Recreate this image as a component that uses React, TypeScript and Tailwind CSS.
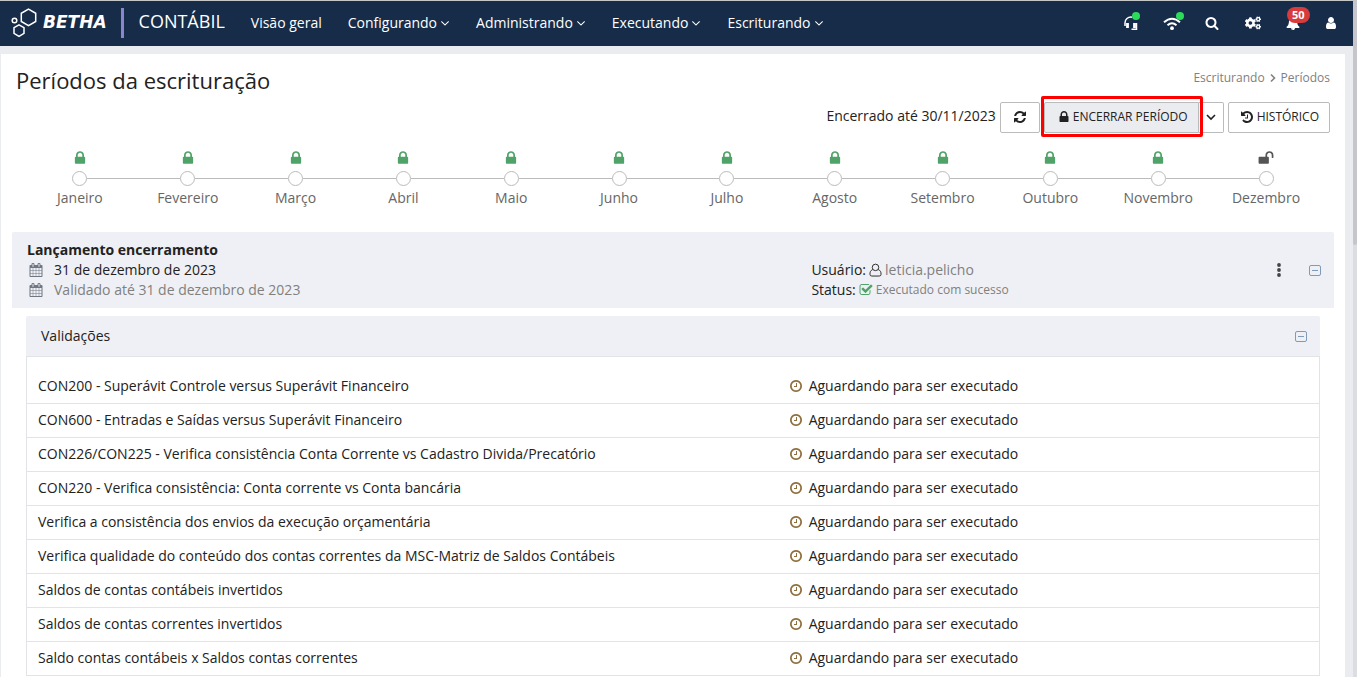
import { FaCogs } from "react-icons/fa";

type IconProps = { d: string; size?: number; className?: string };

function Icon({ d, size = 14, className = "" }: IconProps) {
  return (
    <svg
      viewBox="0 0 1792 1792"
      width={size}
      height={size}
      fill="currentColor"
      className={`shrink-0 ${className}`}
      aria-hidden="true"
    >
      <path d={d} />
    </svg>
  );
}

const LOCK =
  "M640 768h512v-192q0-106-75-181t-181-75-181 75-75 181v192zm832 96v576q0 40-28 68t-68 28h-960q-40 0-68-28t-28-68v-576q0-40 28-68t68-28h32v-192q0-184 132-316t316-132 316 132 132 316v192h32q40 0 68 28t28 68z";
const UNLOCK =
  "M1728 576v256q0 26-19 45t-45 19h-64q-26 0-45-19t-19-45v-256q0-106-75-181t-181-75-181 75-75 181v192h96q40 0 68 28t28 68v576q0 40-28 68t-68 28h-960q-40 0-68-28t-28-68v-576q0-40 28-68t68-28h672v-192q0-185 131.5-316.5t316.5-131.5 316.5 131.5 131.5 316.5z";
const REFRESH =
  "M1639 1056q0 5-1 7-64 268-268 434.5t-478 166.5q-146 0-282.5-55t-243.5-157l-129 129q-19 19-45 19t-45-19-19-45v-448q0-26 19-45t45-19h448q26 0 45 19t19 45-19 45l-137 137q71 66 161 102t187 36q134 0 250-65t186-179q11-17 53-117 8-23 30-23h192q13 0 22.5 9.5t9.5 22.5zm25-800v448q0 26-19 45t-45 19h-448q-26 0-45-19t-19-45 19-45l138-138q-148-137-349-137-134 0-250 65t-186 179q-11 17-53 117-8 23-30 23h-199q-13 0-22.5-9.5t-9.5-22.5v-7q65-268 270-434.5t480-166.5q146 0 284 55.5t245 156.5l130-129q19-19 45-19t45 19 19 45z";
const HISTORY =
  "M1664 896q0 156-61 298t-164 245-245 164-298 61q-172 0-327-72.5t-264-204.5q-7-10-6.5-22.5t8.5-20.5l137-138q10-9 25-9 16 2 23 12 73 95 179 147t225 52q104 0 198.5-40.5t163.5-109.5 109.5-163.5 40.5-198.5-40.5-198.5-109.5-163.5-163.5-109.5-198.5-40.5q-98 0-188 35.5t-160 101.5l137 138q31 30 14 69-17 40-59 40h-448q-26 0-45-19t-19-45v-448q0-42 40-59 39-17 69 14l130 129q107-101 244.5-156.5t284.5-55.5q156 0 298 61t245 164 164 245 61 298zm-640-288v448q0 14-9 23t-23 9h-320q-14 0-23-9t-9-23v-64q0-14 9-23t23-9h224v-352q0-14 9-23t23-9h64q14 0 23 9t9 23z";
const CLOCK =
  "M1024 544v448q0 14-9 23t-23 9h-320q-14 0-23-9t-9-23v-64q0-14 9-23t23-9h224v-352q0-14 9-23t23-9h64q14 0 23 9t9 23zm416 352q0-148-73-273t-198-198-273-73-273 73-198 198-73 273 73 273 198 198 273 73 273-73 198-198 73-273zm224 0q0 209-103 385.5t-279.5 279.5-385.5 103-385.5-103-279.5-279.5-103-385.5 103-385.5 279.5-279.5 385.5-103 385.5 103 279.5 279.5 103 385.5z";
const SEARCH =
  "M1216 832q0-185-131.5-316.5t-316.5-131.5-316.5 131.5-131.5 316.5 131.5 316.5 316.5 131.5 316.5-131.5 131.5-316.5zm512 832q0 52-38 90t-90 38q-54 0-90-38l-343-342q-179 124-399 124-143 0-273.5-55.5t-225-150-150-225-55.5-273.5 55.5-273.5 150-225 225-150 273.5-55.5 273.5 55.5 225 150 150 225 55.5 273.5q0 220-124 399l343 343q37 37 37 90z";
const CALENDAR =
  "M192 1664h288v-288h-288v288zm352 0h320v-288h-320v288zm-352-352h288v-320h-288v320zm352 0h320v-320h-320v320zm-352-384h288v-288h-288v288zm736 736h320v-288h-320v288zm-384-736h320v-288h-320v288zm768 736h288v-288h-288v288zm-384-352h320v-320h-320v320zm-352-864v-288q0-13-9.5-22.5t-22.5-9.5h-64q-13 0-22.5 9.5t-9.5 22.5v288q0 13 9.5 22.5t22.5 9.5h64q13 0 22.5-9.5t9.5-22.5zm736 864h288v-320h-288v320zm-384-384h320v-288h-320v288zm384 0h288v-288h-288v288zm32-480v-288q0-13-9.5-22.5t-22.5-9.5h-64q-13 0-22.5 9.5t-9.5 22.5v288q0 13 9.5 22.5t22.5 9.5h64q13 0 22.5-9.5t9.5-22.5zm384-64v1280q0 52-38 90t-90 38h-1408q-52 0-90-38t-38-90v-1280q0-52 38-90t90-38h128v-96q0-66 47-113t113-47h64q66 0 113 47t47 113v96h384v-96q0-66 47-113t113-47h64q66 0 113 47t47 113v96h128q52 0 90 38t38 90z";
const CHECK_SQUARE =
  "M1472 930v318q0 119-84.5 203.5t-203.5 84.5h-832q-119 0-203.5-84.5t-84.5-203.5v-832q0-119 84.5-203.5t203.5-84.5h832q63 0 117 25 15 7 18 23 3 17-9 29l-49 49q-10 10-23 10-3 0-9-2-23-6-45-6h-832q-66 0-113 47t-47 113v832q0 66 47 113t113 47h832q66 0 113-47t47-113v-254q0-13 9-22l64-64q10-10 23-10 6 0 12 3 20 8 20 29zm231-489l-814 814q-24 24-57 24t-57-24l-430-430q-24-24-24-57t24-57l110-110q24-24 57-24t57 24l263 263 647-647q24-24 57-24t57 24l110 110q24 24 24 57t-24 57z";
const USER =
  "M1536 1399q0 109-62.5 187t-150.5 78h-854q-88 0-150.5-78t-62.5-187q0-85 8.5-160.5t31.5-152 58.5-131 94-89 134.5-34.5q131 128 313 128t313-128q76 0 134.5 34.5t94 89 58.5 131 31.5 152 8.5 160.5zm-256-887q0 159-112.5 271.5t-271.5 112.5-271.5-112.5-112.5-271.5 112.5-271.5 271.5-112.5 271.5 112.5 112.5 271.5z";
const BELL =
  "M912 1696q0-16-16-16-59 0-101.5-42.5t-42.5-101.5q0-16-16-16t-16 16q0 73 51.5 124.5t124.5 51.5q16 0 16-16zm816-288q0 52-38 90t-90 38h-448q0 106-75 181t-181 75-181-75-75-181h-448q-52 0-90-38t-38-90q50-42 91-88t85-119.5 74.5-158.5 50-206 19.5-260q0-152 117-282.5t307-158.5q-8-19-8-39 0-40 28-68t68-28 68 28 28 68q0 20-8 39 190 28 307 158.5t117 282.5q0 139 19.5 260t50 206 74.5 158.5 85 119.5 91 88z";
const ANGLE_DOWN =
  "M1395 736q0 13-10 23l-466 466q-10 10-23 10t-23-10l-466-466q-10-10-10-23t10-23l50-50q10-10 23-10t23 10l393 393 393-393q10-10 23-10t23 10l50 50q10 10 10 23z";

const menus = ["Configurando", "Administrando", "Executando", "Escriturando"];

const months = [
  "Janeiro",
  "Fevereiro",
  "Março",
  "Abril",
  "Maio",
  "Junho",
  "Julho",
  "Agosto",
  "Setembro",
  "Outubro",
  "Novembro",
  "Dezembro",
];

const validations = [
  "CON200 - Superávit Controle versus Superávit Financeiro",
  "CON600 - Entradas e Saídas versus Superávit Financeiro",
  "CON226/CON225 - Verifica consistência Conta Corrente vs Cadastro Divida/Precatório",
  "CON220 - Verifica consistência: Conta corrente vs Conta bancária",
  "Verifica a consistência dos envios da execução orçamentária",
  "Verifica qualidade do conteúdo dos contas correntes da MSC-Matriz de Saldos Contábeis",
  "Saldos de contas contábeis invertidos",
  "Saldos de contas correntes invertidos",
  "Saldo contas contábeis x Saldos contas correntes",
];

function Chevron({ direction = "down" }: { direction?: "down" | "right" }) {
  return (
    <svg
      viewBox="0 0 10 10"
      width={10}
      height={10}
      fill="none"
      stroke="currentColor"
      strokeWidth={1.6}
      className="shrink-0"
      aria-hidden="true"
    >
      <path d={direction === "down" ? "M1 3l4 4 4-4" : "M3 1.5L6.5 5 3 8.5"} />
    </svg>
  );
}

function CollapseButton() {
  return (
    <button aria-label="Recolher" className="pt-px text-[#7f9bb8]">
      <svg viewBox="0 0 12 12" width={12} height={12} fill="none" stroke="currentColor">
        <rect x="0.5" y="0.5" width="11" height="10" rx="1.5" />
        <path d="M3 5.5h6" />
      </svg>
    </button>
  );
}

function Header() {
  return (
    <header className="flex h-[46px] items-center border-t border-[#c4c6c8] bg-[#162c49] pb-0.5 text-white">
      <a href="#" className="ml-2.5 flex items-center">
        <svg viewBox="0 0 30 30" width={30} height={30} fill="none" stroke="#fff" strokeWidth={1.5}>
          <path d="M18.5 1.2l7.2 4.1v8.2l-7.2 4.1-7.2-4.1V5.3z" />
          <path d="M9 16.8l5 2.9v5.7l-5 2.900-5-2.900v-5.700z" />
          <circle cx="4.5" cy="12.5" r="2.3" />
        </svg>
        <span className="ml-[3px] font-['DejaVu_Sans',sans-serif] text-[17px] font-bold italic">BETHA</span>
      </a>
      <span className="ml-3.5 h-[30px] w-[3px] bg-[#8c85cb]" />
      <span className="ml-[15px] pb-1 text-lg">CONTÁBIL</span>
      <nav className="ml-[26px] flex gap-[26px] text-sm">
        <a href="#">Visão geral</a>
        {menus.map((menu) => (
          <button key={menu} className="flex items-center gap-[3px]">
            {menu}
            <Icon d={ANGLE_DOWN} size={14} className="-mx-0.5" />
          </button>
        ))}
      </nav>

      <div className="mr-[15px] ml-auto flex items-center">
        <button aria-label="Suporte" className="relative w-[41px]">
          <svg viewBox="0 0 16 16" width={16} height={16} fill="none" stroke="currentColor" className="mx-auto">
            <path d="M2 11V8a6 5.500 0 0 1 7-5.800" strokeWidth={1.500} />
            <path d="M13.500 8v6.200H8.500" strokeWidth={1.500} />
            <path d="M4.500 8v5M11.500 8v5" strokeWidth={2.800} />
          </svg>
          <span className="absolute -top-[3px] right-[11px] size-2 rounded-full bg-[#2ddb5b]" />
        </button>
        <button aria-label="Conexão" className="relative w-[41px]">
          <svg viewBox="0 0 18 16" width={18} height={16} fill="none" stroke="currentColor" className="mx-auto">
            <path d="M1 7.2q8-7 16 0M4.500 10.200q4.500-4 9 0" strokeWidth={2} />
            <circle cx="9" cy="13.200" r="1.900" fill="currentColor" stroke="none" />
          </svg>
          <span className="absolute -top-[3px] right-2 size-2 rounded-full bg-[#2ddb5b]" />
        </button>
        <button aria-label="Pesquisar" className="w-10">
          <Icon d={SEARCH} className="mx-auto" />
        </button>
        <button aria-label="Configurações" className="w-[41px]">
          <FaCogs size={16} className="mx-auto" />
        </button>
        <button aria-label="Notificações" className="relative w-10">
          <Icon d={BELL} className="mx-auto" />
          <span className="absolute -top-[9px] left-3.5 rounded-full bg-[#d83b3b] px-[5px] text-[11px] leading-4 font-bold">
            50
          </span>
        </button>
        <button aria-label="Usuário" className="ml-[11px]">
          <Icon d={USER} />
        </button>
      </div>
    </header>
  );
}

function Toolbar() {
  return (
    <div className="mt-[7px] flex justify-end gap-1 pr-[15px] text-xs">
      <span className="text-sm leading-7">Encerrado até 30/11/2023</span>
      <button aria-label="Atualizar" className="flex h-[31px] w-10 items-center justify-center rounded-xs border border-[#bbb] pb-px">
        <Icon d={REFRESH} />
      </button>
      <div className="relative flex">
        <button className="flex h-[31px] items-center gap-0.5 rounded-l-xs border border-[#bbb] bg-[#ebecf0] pr-2.5 pb-0.5 pl-3">
          <Icon d={LOCK} />
          ENCERRAR PERÍODO
        </button>
        <button aria-label="Mais opções" className="flex w-[25px] items-center justify-center rounded-r-xs border border-l-0 border-[#bbb] pb-0.5">
          <Chevron />
        </button>
        <div className="pointer-events-none absolute -top-1.5 right-[21px] -bottom-1 -left-[3px] rounded-xs border-3 border-[#fe0000]" />
      </div>
      <button className="flex h-[31px] items-center gap-[3px] rounded-xs border border-[#bbb] pr-2.5 pb-0.5 pl-[11px]">
        <Icon d={HISTORY} />
        HISTÓRICO
      </button>
    </div>
  );
}

function Timeline() {
  return (
    <ol className="mt-[17px] flex px-[25px] text-sm text-[#666]">
      {months.map((month, i) => {
        const open = i === months.length - 1;
        return (
          <li key={month} className="flex flex-1 flex-col items-center">
            <Icon d={open ? UNLOCK : LOCK} size={16} className={open ? "text-[#555]" : "text-[#50a368]"} />
            <div className="mt-[5px] flex w-full items-center">
              <span className={i === 0 ? "h-px flex-1" : "h-px flex-1 bg-[#bbb]"} />
              <span className="size-[15px] rounded-full border border-[#bbb]" />
              <span className={open ? "h-px flex-1" : "h-px flex-1 bg-[#bbb]"} />
            </div>
            <span className="mt-0.5 leading-5">{month}</span>
          </li>
        );
      })}
    </ol>
  );
}

function ClosingSummary() {
  return (
    <section className="mx-[11px] mt-6 flex h-[76px] rounded-t-xs bg-[#eff0f5] pt-2 pr-[13px] pl-[15px] text-sm">
      <div className="w-3/5">
        <h2 className="font-bold">Lançamento encerramento</h2>
        <p className="flex items-center gap-[11px]">
          <Icon d={CALENDAR} className="ml-0.5 text-[#6f7782]" />
          31 de dezembro de 2023
        </p>
        <p className="flex items-center gap-[11px] text-[#808080]">
          <Icon d={CALENDAR} className="ml-0.5 text-[#6f7782]" />
          Validado até 31 de dezembro de 2023
        </p>
      </div>
      <div className="pt-5 pl-2">
        <p className="flex items-center gap-[3px]">
          Usuário:
          <svg viewBox="0 0 14 14" width={13} height={14} fill="none" stroke="currentColor" aria-hidden="true">
            <circle cx="7" cy="4.2" r="3.5" />
            <path d="M4 6.5C1.500 7.500 1 9.500 1 11.500q0 2 2 2h8q2 0 2-2c0-2-.5-4-3-5" />
          </svg>
          <span className="text-[#808080]">leticia.pelicho</span>
        </p>
        <p className="flex items-center gap-[3px]">
          Status:
          <Icon d={CHECK_SQUARE} className="text-[#50a368]" />
          <span className="text-xs text-[#808080]">Executado com sucesso</span>
        </p>
      </div>
      <div className="ml-auto flex h-[60px] items-center gap-7">
        <button aria-label="Opções" className="text-[#444]">
          <svg viewBox="0 0 4 14" width={4} height={14} fill="currentColor">
            <circle cx="2" cy="2" r="1.9" />
            <circle cx="2" cy="7" r="1.9" />
            <circle cx="2" cy="12" r="1.9" />
          </svg>
        </button>
        <CollapseButton />
      </div>
    </section>
  );
}

function Validations() {
  return (
    <section className="mx-[25px] mt-2 text-sm">
      <div className="flex h-10 items-center justify-between rounded-t-xs bg-[#eff0f5] pr-[13px] pl-[15px]">
        <h3>Validações</h3>
        <CollapseButton />
      </div>
      <div className="border-x border-t border-[#e2e3e6] pt-3">
        <table className="w-full table-fixed border-collapse">
          <tbody>
            {validations.map((name) => (
              <tr key={name} className="h-[34px] border-b border-[#e2e3e6]">
                <td className="w-7/12 pl-[11px]">{name}</td>
                <td className="pl-2">
                  <span className="flex items-center gap-1.5">
                    <Icon d={CLOCK} className="text-[#8f6f3e]" />
                    Aguardando para ser executado
                  </span>
                </td>
              </tr>
            ))}
          </tbody>
        </table>
      </div>
    </section>
  );
}

export default function App() {
  return (
    <div className="flex h-screen overflow-hidden bg-[#ebecf0] font-['Open_Sans',sans-serif] text-[#222]">
      <div className="min-w-0 flex-1">
        <Header />
        <main className="mt-2 mr-2 ml-px min-h-full bg-white pt-[11px]">
          <div className="flex items-start justify-between px-[15px]">
            <h1 className="text-[22px] leading-[30px]">Períodos da escrituração</h1>
            <nav className="flex items-center gap-[3px] text-xs leading-[26px] text-[#808080]">
              <a href="#">Escriturando</a>
              <Chevron direction="right" />
              <span>Períodos</span>
            </nav>
          </div>
          <Toolbar />
          <Timeline />
          <ClosingSummary />
          <Validations />
        </main>
      </div>
      {/* scroll bar */}
      <div className="w-1 bg-[#dcdde3]">
        <div className="h-[245px] rounded-b-xs bg-[#c5c5cb]" />
      </div>
    </div>
  );
}
